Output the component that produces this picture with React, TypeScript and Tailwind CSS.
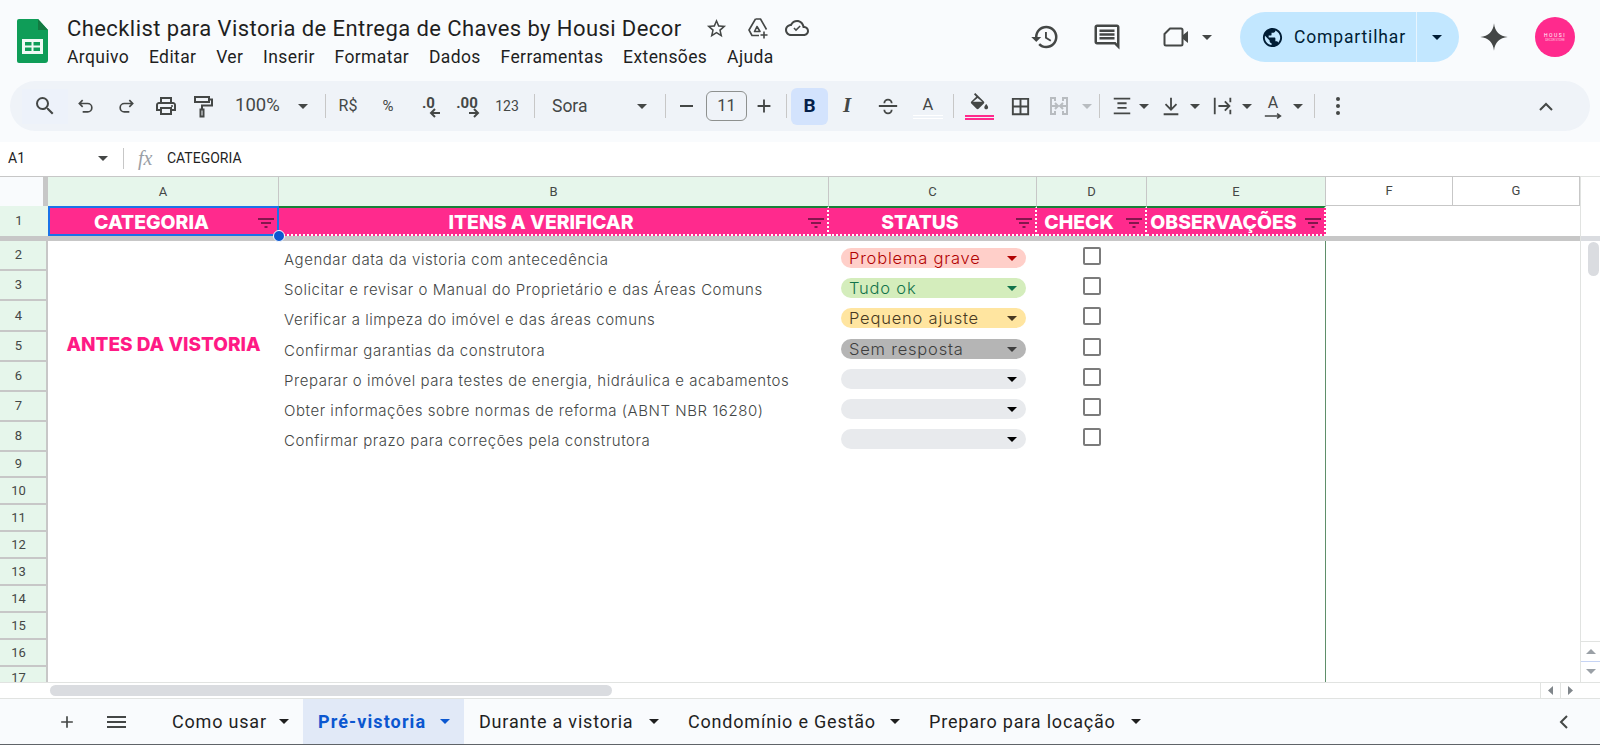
import { ReactNode } from "react"

const ui = "font-['Roboto',sans-serif]"
const sora = "font-['Inter',sans-serif]"

function Caret({ color = "#444746", className = "" }: { color?: string; className?: string }) {
  return (
    <svg width="10" height="5" viewBox="0 0 10 5" className={className}>
      <path d="M0 0h10L5 5z" fill={color} />
    </svg>
  )
}

function Icon({ size = 24, children, className = "" }: { size?: number; children: ReactNode; className?: string }) {
  return (
    <svg width={size} height={size} viewBox="0 0 24 24" fill="#444746" className={className}>
      {children}
    </svg>
  )
}

function Tool({ w, children, className = "" }: { w: string; children?: ReactNode; className?: string }) {
  return <div className={`${w} h-full flex items-center justify-center shrink-0 ${className}`}>{children}</div>
}

function Sep() {
  return <div className="w-px h-[24px] bg-[#c7c7c7] shrink-0" />
}

function SheetsLogo() {
  return (
    <svg width="31" height="44" viewBox="0 0 31 44" className="shrink-0">
      <path d="M2 0h19l10 11v30a3 3 0 0 1-3 3H2a2 2 0 0 1-2-2V2a2 2 0 0 1 2-2z" fill="#0f9d58" />
      <path d="M21 0l10 11H21z" fill="#137a41" />
      <path d="M5 20h21v15H5z" fill="#f1faf5" />
      <path d="M8 23h6.500v3.500H8zM16.500 23H23v3.500h-6.500zM8 28.500h6.500V32H8zM16.500 28.500H23V32h-6.500z" fill="#0f9d58" />
    </svg>
  )
}

function TitleBar() {
  const menu = ["Arquivo", "Editar", "Ver", "Inserir", "Formatar", "Dados", "Ferramentas", "Extensões", "Ajuda"]
  return (
    <div className={`h-[81px] flex items-start bg-[#f9fbfd] pl-[17px] pr-[25px] shrink-0 ${ui}`}>
      <div className="pt-[19px]">
        <SheetsLogo />
      </div>
      <div className="ml-[19px] pt-[12px]">
        <div className="flex items-center h-[32px]">
          <span className="text-[22px] text-[#1f1f1f] whitespace-nowrap tracking-[0.42px]">Checklist para Vistoria de Entrega de Chaves by Housi Decor</span>
          <Icon size={23} className="ml-[23px]">
            <path d="M22 9.240l-7.190-.620L12 2 9.190 8.630 2 9.240l5.460 4.730L5.820 21 12 17.270 18.180 21l-1.630-7.030L22 9.240zM12 15.400l-3.760 2.270 1-4.280-3.320-2.880 4.380-.380L12 6.100l1.710 4.040 4.380.380-3.320 2.880 1 4.280L12 15.400z" />
          </Icon>
          <svg width="24" height="24" viewBox="0 0 24 24" fill="none" stroke="#444746" strokeWidth="1.600" className="ml-[18px]">
            <path d="M9.500 3h5L20.500 13.500M9.500 3L3 14l3 5.500h7" strokeLinejoin="round" />
            <path d="M8.500 15.500H14L11 10.500z" strokeLinejoin="round" />
            <path d="M18 15.500v7M14.500 19h7" />
          </svg>
          <Icon size={24} className="ml-[15px]">
            <path d="M19.350 10.040C18.670 6.590 15.640 4 12 4 9.110 4 6.600 5.640 5.350 8.040 2.340 8.360 0 10.910 0 14c0 3.310 2.690 6 6 6h13c2.760 0 5-2.240 5-5 0-2.640-2.050-4.780-4.650-4.960zM19 18H6c-2.210 0-4-1.790-4-4 0-2.050 1.530-3.760 3.560-3.970l1.070-.110.500-.950C8.080 7.140 9.940 6 12 6c2.620 0 4.880 1.860 5.390 4.430l.300 1.500 1.530.110c1.560.100 2.780 1.410 2.780 2.960 0 1.650-1.350 3-3 3zm-8-2.800l-2.600-2.600 1.100-1.100 1.500 1.500 3.600-3.600 1.100 1.100z" />
          </Icon>
        </div>
        <div className="flex items-center gap-[19.750px] mt-[1px] h-[24px] text-[17.500px] tracking-[0.4px] text-[#1f1f1f]">
          {menu.map((m) => (
            <span key={m}>{m}</span>
          ))}
        </div>
      </div>
      <div className="ml-auto flex items-center h-[74px]">
        <Icon size={30} className="mr-[32px]">
          <path d="M13 3a9 9 0 0 0-9 9H1l3.890 3.890.070.140L9 12H6c0-3.870 3.130-7 7-7s7 3.130 7 7-3.130 7-7 7c-1.930 0-3.680-.790-4.940-2.060l-1.420 1.420A8.954 8.954 0 0 0 13 21a9 9 0 0 0 0-18zm-1 5v5l4.280 2.540.720-1.210-3.500-2.080V8H12z" />
        </Icon>
        <Icon size={30} className="mr-[40px]">
          <path d="M21.990 4c0-1.100-.890-2-1.990-2H4c-1.100 0-2 .900-2 2v12c0 1.100.900 2 2 2h14l4 4-.010-18zM20 4v13.170L18.830 16H4V4h16zM6 12h12v2H6zm0-3h12v2H6zm0-3h12v2H6z" />
        </Icon>
        <svg width="28" height="24" viewBox="0 0 28 24" fill="none" className="mr-[12px]">
          <path d="M8 3.500h11a1.500 1.500 0 0 1 1.500 1.500v14a1.500 1.500 0 0 1-1.500 1.500H4A1.500 1.500 0 0 1 2.500 19V9z" stroke="#444746" strokeWidth="2" strokeLinejoin="round" />
          <path d="M21 10l5-4v12l-5-4z" fill="#444746" />
        </svg>
        <Caret className="mr-[28px]" />
        <div className="flex h-[50px] w-[219px] rounded-full overflow-hidden bg-[#c2e7ff] text-[#001d35]">
          <div className="w-[177px] flex items-center pl-[21px] border-r border-[#e8f5fe]">
            <svg width="23" height="23" viewBox="0 0 24 24" fill="#001d35">
              <path d="M12 2C6.480 2 2 6.480 2 12s4.480 10 10 10 10-4.480 10-10S17.520 2 12 2zm-1 17.930c-3.950-.490-7-3.850-7-7.930 0-.620.080-1.210.210-1.790L9 15v1c0 1.100.900 2 2 2v1.930zm6.900-2.540c-.260-.810-1-1.390-1.900-1.390h-1v-3c0-.550-.450-1-1-1H8v-2h2c.550 0 1-.450 1-1V7h2c1.100 0 2-.900 2-2v-.410c2.930 1.190 5 4.060 5 7.410 0 2.080-.800 3.970-2.100 5.390z" />
            </svg>
            <span className="ml-[10px] text-[17.500px] tracking-[0.85px]">Compartilhar</span>
          </div>
          <div className="flex-1 flex items-center justify-center pr-[2px]">
            <Caret color="#001d35" />
          </div>
        </div>
        <svg width="30" height="30" viewBox="0 0 24 24" fill="#444746" className="ml-[20px]">
          <path d="M12 1c.600 6.500 4.500 10.400 11 11-6.500.600-10.400 4.500-11 11-.600-6.500-4.500-10.400-11-11 6.500-.600 10.400-4.500 11-11z" />
        </svg>
        <div className="ml-[26px] w-[40px] h-[40px] rounded-full bg-[#ff2a8d] flex flex-col items-center justify-center text-white leading-none">
          <span className="text-[5px] tracking-[1.500px]">HOUSI</span>
          <span className="text-[3px] opacity-70 mt-[1px]">DECOR STORE</span>
        </div>
      </div>
    </div>
  )
}

function Toolbar() {
  return (
    <div className="bg-[#f9fbfd] px-[10px] pb-[11px] shrink-0">
      <div className={`h-[50px] rounded-full bg-[#eff3f8] flex items-center pl-[12px] text-[#444746] ${ui}`}>
        <Tool w="w-[46px]" className="bg-[#edf2fa] !h-[35px]">
          <Icon size={24}>
            <path d="M15.500 14h-.790l-.280-.270A6.471 6.471 0 0 0 16 9.500 6.500 6.500 0 1 0 9.500 16c1.610 0 3.090-.590 4.230-1.570l.270.280v.790l5 4.990L20.490 19l-4.990-5zm-6 0C7.010 14 5 11.990 5 9.500S7.010 5 9.500 5 14 7.010 14 9.500 11.990 14 9.500 14z" />
          </Icon>
        </Tool>
        <Tool w="w-[36px]">
          <svg width="20" height="20" viewBox="0 0 24 24" fill="none" stroke="#444746" strokeWidth="2">
            <path d="M8 5L4 9l4 4M4 9h10a5 5 0 0 1 0 10H8" />
          </svg>
        </Tool>
        <Tool w="w-[44px]">
          <svg width="20" height="20" viewBox="0 0 24 24" fill="none" stroke="#444746" strokeWidth="2">
            <path d="M16 5l4 4-4 4M20 9H10a5 5 0 0 0 0 10h6" />
          </svg>
        </Tool>
        <Tool w="w-[36px]">
          <Icon size={24}>
            <path d="M19 8h-1V3H6v5H5c-1.660 0-3 1.340-3 3v6h4v4h12v-4h4v-6c0-1.660-1.340-3-3-3zM8 5h8v3H8V5zm8 12v2H8v-4h8v2zm2-2v-2H6v2H4v-4c0-.550.450-1 1-1h14c.550 0 1 .450 1 1v4h-2z" />
            <circle cx="18" cy="12" r="1" />
          </Icon>
        </Tool>
        <Tool w="w-[38px]">
          <svg width="22" height="24" viewBox="0 0 22 24" fill="none" stroke="#444746" strokeWidth="2">
            <path d="M3 3h14v5H3zM17 5.500h3v6H10v4" />
            <path d="M8.500 15.500h3v7h-3z" />
          </svg>
        </Tool>
        <span className="ml-[13px] w-[57px] text-[18.500px]">100%</span>
        <Tool w="w-[22px]">
          <Caret />
        </Tool>
        <div className="w-[11px]" />
        <Sep />
        <Tool w="w-[44px]" className="text-[16px]">R$</Tool>
        <Tool w="w-[36px]" className="text-[15px]">%</Tool>
        <Tool w="w-[50px]" className="relative font-bold">
          <span className="text-[15px] -mt-[5px] -ml-[5px]">.0</span>
          <svg width="12" height="10" viewBox="0 0 12 10" className="absolute left-[23px] top-[27px]" stroke="#444746" strokeWidth="2" fill="none">
            <path d="M11 5H2M6 1L2 5l4 4" />
          </svg>
        </Tool>
        <Tool w="w-[38px]" className="relative font-bold">
          <span className="text-[15px] -mt-[5px] -ml-[16px]">.00</span>
          <svg width="12" height="10" viewBox="0 0 12 10" className="absolute left-[12px] top-[27px]" stroke="#444746" strokeWidth="2" fill="none">
            <path d="M1 5h9M6 1l4 4-4 4" />
          </svg>
        </Tool>
        <Tool w="w-[30px]" className="text-[14px]">
          <span className="-ml-[4px]">123</span>
        </Tool>
        <div className="w-[10px]" />
        <Sep />
        <span className="ml-[17px] w-[79px] text-[17.500px]">Sora</span>
        <Tool w="w-[22px]">
          <Caret />
        </Tool>
        <div className="w-[12px]" />
        <Sep />
        <Tool w="w-[40px]">
          <div className="w-[13px] h-[2px] bg-[#444746]" />
        </Tool>
        <div className="w-[41px] h-[30px] rounded-[6px] border border-[#8e918f] flex items-center justify-center text-[16.500px] shrink-0">11</div>
        <Tool w="w-[34px]">
          <Icon size={22}>
            <path d="M19 13h-6v6h-2v-6H5v-2h6V5h2v6h6z" />
          </Icon>
        </Tool>
        <div className="w-[5px]" />
        <Sep />
        <div className="w-[4px]" />
        <div className="w-[37px] h-[37px] rounded-[6px] bg-[#d3e3fd] flex items-center justify-center text-[#041e49] text-[19px] font-bold shrink-0">B</div>
        <Tool w="w-[38px]" className="font-['Liberation_Serif',serif] italic font-bold text-[21px]">I</Tool>
        <Tool w="w-[44px]">
          <svg width="22" height="22" viewBox="0 0 24 24" fill="none" stroke="#444746" strokeWidth="2">
            <path d="M2 12h20M8 9a4 4 0 0 1 8 0M8 16a4 4 0 0 0 8 0" />
          </svg>
        </Tool>
        <Tool w="w-[36px]" className="flex-col">
          <span className="text-[16.500px] leading-[18px] mt-[2px]">A</span>
          <div className="w-[30px] h-[4px] mt-[1px] border-y border-white" />
        </Tool>
        <div className="w-[7px]" />
        <Sep />
        <Tool w="w-[50px]" className="flex-col">
          <Icon size={23}>
            <path
              fillRule="evenodd"
              d="M16.560 8.940L7.620 0 6.210 1.410l2.380 2.380-5.150 5.150c-.590.590-.590 1.540 0 2.120l5.500 5.500c.290.290.680.440 1.060.440s.770-.150 1.060-.440l5.500-5.500c.590-.580.590-1.530 0-2.120zM5.210 9L10 5.210 14.790 9H5.210zM19 11.500s-2 2.170-2 3.500c0 1.100.900 2 2 2s2-.900 2-2c0-1.330-2-3.500-2-3.500z"
            />
          </Icon>
          <div className="w-[29px] h-[5px] border-y-2 border-[#ff2a8d] -mt-[1px]" />
        </Tool>
        <Tool w="w-[33px]">
          <Icon size={23}>
            <path d="M3 3v18h18V3H3zm8 16H5v-6h6v6zm0-8H5V5h6v6zm8 8h-6v-6h6v6zm0-8h-6V5h6v6z" />
          </Icon>
        </Tool>
        <Tool w="w-[44px]">
          <svg width="24" height="24" viewBox="0 0 24 24" fill="none" stroke="#b8bcc0" strokeWidth="2">
            <path d="M8 7V4H4v16h4v-3M16 7V4h4v16h-4v-3M3 12h8M8 9l3 3-3 3M21 12h-8M16 9l-3 3 3 3" />
          </svg>
        </Tool>
        <Tool w="w-[12px]">
          <Caret color="#b8bcc0" />
        </Tool>
        <div className="w-[6px]" />
        <Sep />
        <Tool w="w-[38px]" className="pl-[5px]">
          <svg width="22" height="22" viewBox="0 0 24 24" stroke="#444746" strokeWidth="2" className="shrink-0">
            <path d="M3 4h18M7 9h10M7 14h10M3 20h18" />
          </svg>
        </Tool>
        <Tool w="w-[12px]">
          <Caret />
        </Tool>
        <Tool w="w-[37px]" className="pl-[5px]">
          <svg width="22" height="22" viewBox="0 0 24 24" fill="none" stroke="#444746" strokeWidth="2" className="shrink-0">
            <path d="M4 21h16M12 3v13M6 10l6 6 6-6" />
          </svg>
        </Tool>
        <Tool w="w-[16px]">
          <Caret />
        </Tool>
        <Tool w="w-[38px]" className="pl-[2px]">
          <svg width="22" height="22" viewBox="0 0 24 24" fill="none" stroke="#444746" strokeWidth="2" className="shrink-0">
            <path d="M3 3v18M20 3v5M20 16v5M7 12h12M14 7l5 5-5 5" />
          </svg>
        </Tool>
        <Tool w="w-[12px]">
          <Caret />
        </Tool>
        <Tool w="w-[40px]" className="relative">
          <span className="text-[16px] -mt-[7px]">A</span>
          <svg width="18" height="8" viewBox="0 0 22 8" className="absolute left-[11px] top-[31px]" fill="none" stroke="#444746" strokeWidth="2">
            <path d="M1 4h18M16 1l4 3-4 3" />
          </svg>
        </Tool>
        <Tool w="w-[10px]">
          <Caret />
        </Tool>
        <div className="w-[11px]" />
        <Sep />
        <Tool w="w-[46px]">
          <div className="flex flex-col gap-[3px]">
            <div className="w-[4px] h-[4px] rounded-full bg-[#444746]" />
            <div className="w-[4px] h-[4px] rounded-full bg-[#444746]" />
            <div className="w-[4px] h-[4px] rounded-full bg-[#444746]" />
          </div>
        </Tool>
        <div className="ml-auto mr-[37px]">
          <svg width="14" height="9" viewBox="0 0 14 9" fill="none" stroke="#444746" strokeWidth="2">
            <path d="M1 8l6-6 6 6" />
          </svg>
        </div>
      </div>
    </div>
  )
}

function FormulaBar() {
  return (
    <div className={`h-[34px] bg-white flex items-center shrink-0 pb-[2px] text-[14px] text-[#1f1f1f] ${ui}`}>
      <span className="ml-[8px] w-[90px]">A1</span>
      <Caret className="shrink-0" />
      <div className="ml-[15px] w-px h-[21px] bg-[#c7c7c7]" />
      <span className="ml-[14px] w-[30px] font-['Liberation_Serif',serif] italic text-[20px] text-[#9aa0a6]">fx</span>
      <span className="-ml-[1px]">CATEGORIA</span>
    </div>
  )
}

const cols = "grid grid-cols-[48px_231px_550px_208px_110px_179px_127px_127px]"

function ColumnHeader() {
  const letters = ["A", "B", "C", "D", "E", "F", "G"]
  return (
    <div className={`${cols} h-[30px] border-t border-[#c7c7c7] text-[13px] text-[#444746] ${ui}`}>
      <div className="bg-[#f9fbfd] border-r-[5px] border-[#c7c7c7]" />
      {letters.map((l, i) => (
        <div
          key={l}
          className={`flex items-center justify-center border-r border-[#c7c7c7] ${i < 5 ? "bg-[#e6f6eb]" : "bg-white border-b"}`}
        >
          {l}
        </div>
      ))}
    </div>
  )
}

function FilterIcon() {
  return (
    <svg width="16" height="10" viewBox="0 0 16 10" className="absolute right-[3px] top-[10px]" stroke="#5b1038" strokeWidth="1.500">
      <path d="M0 1h16M3 5h10M6.500 9h3" />
    </svg>
  )
}

function HeaderRow() {
  const heads = ["CATEGORIA", "ITENS A VERIFICAR", "STATUS", "CHECK", "OBSERVAÇÕES"]
  return (
    <div className={`${cols} grid-rows-[30px] h-[30px] relative`}>
      <div className={`bg-[#e6f6eb] flex items-center justify-center pr-[10px] text-[13px] text-[#444746] ${ui}`}>1</div>
      {heads.map((h, i) => (
        <div
          key={h}
          className={`relative bg-[#ff2a8d] flex items-center justify-center pr-[24px] pt-[3px] leading-none text-white text-[19.400px] font-extrabold whitespace-nowrap ${sora} ${
            i === 0
              ? "border-2 border-[#1a73e8]"
              : "border-t-2 border-t-[#188038] border-b-2 border-r-2 border-dotted border-b-white border-r-white [border-top-style:solid]"
          }`}
        >
          {h}
          <FilterIcon />
        </div>
      ))}
      <div className="col-span-2" />
      {/* alca de selecao */}
      <div className="absolute left-[273px] top-[24px] w-[12px] h-[12px] rounded-full bg-[#0b57d0] border border-white z-10" />
    </div>
  )
}

type Status = { label: string; bg: string; fg: string } | null

const items: { text: string; status: Status }[] = [
  { text: "Agendar data da vistoria com antecedência", status: { label: "Problema grave", bg: "bg-[#ffcfc9]", fg: "#b10202" } },
  { text: "Solicitar e revisar o Manual do Proprietário e das Áreas Comuns", status: { label: "Tudo ok", bg: "bg-[#d4edbc]", fg: "#11734b" } },
  { text: "Verificar a limpeza do imóvel e das áreas comuns", status: { label: "Pequeno ajuste", bg: "bg-[#ffe5a0]", fg: "#473821" } },
  { text: "Confirmar garantias da construtora", status: { label: "Sem resposta", bg: "bg-[#b5b5b5]", fg: "#3d3d3d" } },
  { text: "Preparar o imóvel para testes de energia, hidráulica e acabamentos", status: null },
  { text: "Obter informações sobre normas de reforma (ABNT NBR 16280)", status: null },
  { text: "Confirmar prazo para correções pela construtora", status: null },
]

const fgClass: Record<string, string> = {
  "#b10202": "text-[#b10202]",
  "#11734b": "text-[#11734b]",
  "#473821": "text-[#473821]",
  "#3d3d3d": "text-[#3d3d3d]",
}

function RowNum({ n, className = "" }: { n: number; className?: string }) {
  return (
    <div className={`bg-[#e6f6eb] border-b-2 border-r-2 border-[#c7c7c7] flex items-center justify-center pr-[9px] text-[13px] text-[#444746] overflow-hidden ${ui} ${className}`}>
      {n}
    </div>
  )
}

function Body() {
  const emptyRows = [
    { n: 9, h: "h-[26px]" },
    { n: 10, h: "h-[27px]" },
    { n: 11, h: "h-[27px]" },
    { n: 12, h: "h-[27px]" },
    { n: 13, h: "h-[27px]" },
    { n: 14, h: "h-[27px]" },
    { n: 15, h: "h-[27px]" },
    { n: 16, h: "h-[27px]" },
    { n: 17, h: "h-[24px]" },
  ]
  return (
    <div className="h-[441px] overflow-hidden">
      <div className="grid grid-cols-[48px_231px_550px_208px_110px_179px_254px] grid-rows-[30px_30px_31px_30px_30px_30px_30px]">
        {items.map((item, i) => (
          <div key={item.text} className="contents">
            <RowNum n={i + 2} />
            {i === 0 && (
              <div className={`row-span-7 col-start-2 row-start-1 flex items-center justify-center pb-[3px] text-[#ff1a85] text-[19px] font-extrabold whitespace-nowrap ${sora}`}>
                ANTES DA VISTORIA
              </div>
            )}
            <div className={`col-start-3 h-[30px] flex items-end pl-[5px] text-[15px] font-light text-[#444746] whitespace-nowrap tracking-[0.55px] ${sora}`}>{item.text}</div>
            <div className="flex items-start pl-[12px] pt-[7px]">
              <div className={`w-[185px] h-[20px] rounded-full flex items-center justify-between pl-[8px] pr-[9px] text-[16.500px] font-light tracking-[0.8px] ${sora} ${item.status ? item.status.bg : "bg-[#e8eaed]"} ${item.status ? fgClass[item.status.fg] : ""}`}>
                <span>{item.status?.label}</span>
                <Caret color={item.status ? item.status.fg : "#000000"} className="shrink-0" />
              </div>
            </div>
            <div className="flex justify-center pt-[6px]">
              <div className="w-[18px] h-[18px] rounded-[2px] border-2 border-[#7b7b7b] bg-white" />
            </div>
            <div className="border-r border-[#5f8f6a]" />
            <div />
          </div>
        ))}
      </div>
      {emptyRows.map((r) => (
        <div key={r.n} className={`grid grid-cols-[48px_1278px_254px] ${r.h}`}>
          <RowNum n={r.n} />
          <div className="border-r border-[#5f8f6a]" />
          <div />
        </div>
      ))}
    </div>
  )
}

function VerticalScrollbar() {
  return (
    <div className="w-[20px] shrink-0 border-l border-[#e1e3e1] flex flex-col border-t">
      <div className="h-[64px] shrink-0 border-b-[5px] border-[#dadce0]" />
      <div className="w-[11px] h-[34px] ml-[7px] mt-[1px] rounded-full bg-[#dadce0]" />
      <div className="mt-auto h-[20px] flex items-center justify-center border-t border-[#e1e3e1]">
        <svg width="10" height="5" viewBox="0 0 10 5"><path d="M0 5h10L5 0z" fill="#9aa0a6" /></svg>
      </div>
      <div className="h-[20px] flex items-center justify-center border-t border-[#c6d4f5] mb-[1px]">
        <Caret color="#9aa0a6" />
      </div>
    </div>
  )
}

function HorizontalScrollbar() {
  return (
    <div className="h-[17px] border-y border-[#e1e3e1] flex items-center shrink-0 bg-white">
      <div className="ml-[50px] w-[562px] h-[11px] rounded-full bg-[#dadce0]" />
      <div className="ml-auto mr-[20px] h-full w-[40px] flex border-l border-[#e1e3e1]">
        <div className="flex-1 flex items-center justify-center border-r border-[#e1e3e1]">
          <svg width="5" height="9" viewBox="0 0 5 9"><path d="M5 0v9L0 4.500z" fill="#80868b" /></svg>
        </div>
        <div className="flex-1 flex items-center justify-center">
          <svg width="5" height="9" viewBox="0 0 5 9"><path d="M0 0v9l5-4.500z" fill="#80868b" /></svg>
        </div>
      </div>
    </div>
  )
}

function Tabs() {
  const tabs = [
    { name: "Como usar", w: "w-[146px]", active: false },
    { name: "Pré-vistoria", w: "w-[161px]", active: true },
    { name: "Durante a vistoria", w: "w-[209px]", active: false },
    { name: "Condomínio e Gestão", w: "w-[241px]", active: false },
    { name: "Preparo para locação", w: "w-[241px]", active: false },
  ]
  return (
    <div className={`h-[46px] bg-[#f9fbfd] border-b border-[#5f6368] flex items-center shrink-0 text-[18px] tracking-[0.8px] text-[#1f1f1f] ${ui}`}>
      <div className="w-[92px] flex justify-end shrink-0 -ml-[15px]">
        <Icon size={20}>
          <path d="M19 13h-6v6h-2v-6H5v-2h6V5h2v6h6z" />
        </Icon>
      </div>
      <div className="ml-[30px] w-[20px] shrink-0 flex flex-col gap-[3px]">
        <div className="h-[2px] w-[19px] bg-[#444746]" />
        <div className="h-[2px] w-[19px] bg-[#444746]" />
        <div className="h-[2px] w-[19px] bg-[#444746]" />
      </div>
      <div className="w-[30px] shrink-0" />
      {tabs.map((t) => (
        <div
          key={t.name}
          className={`${t.w} h-full shrink-0 flex items-center justify-between pl-[15px] pr-[14px] ${t.active ? "bg-[#e1e9f7] text-[#0b57d0] font-bold tracking-[1.100px]" : ""}`}
        >
          <span className="whitespace-nowrap">{t.name}</span>
          <Caret color={t.active ? "#0b57d0" : "#1f1f1f"} className="shrink-0" />
        </div>
      ))}
      <div className="ml-auto mr-[32px]">
        <svg width="9" height="14" viewBox="0 0 9 14" fill="none" stroke="#444746" strokeWidth="2">
          <path d="M8 1L2 7l6 6" />
        </svg>
      </div>
    </div>
  )
}

export default function App() {
  return (
    <div className="w-[1600px] h-[745px] flex flex-col overflow-hidden bg-white">
      <TitleBar />
      <Toolbar />
      <FormulaBar />
      <div className="h-[506px] flex shrink-0">
        <div className="w-[1580px] shrink-0">
          <ColumnHeader />
          <HeaderRow />
          <div className="h-[5px] bg-[#c7c7c7]" />
          <Body />
        </div>
        <VerticalScrollbar />
      </div>
      <HorizontalScrollbar />
      <Tabs />
    </div>
  )
}
